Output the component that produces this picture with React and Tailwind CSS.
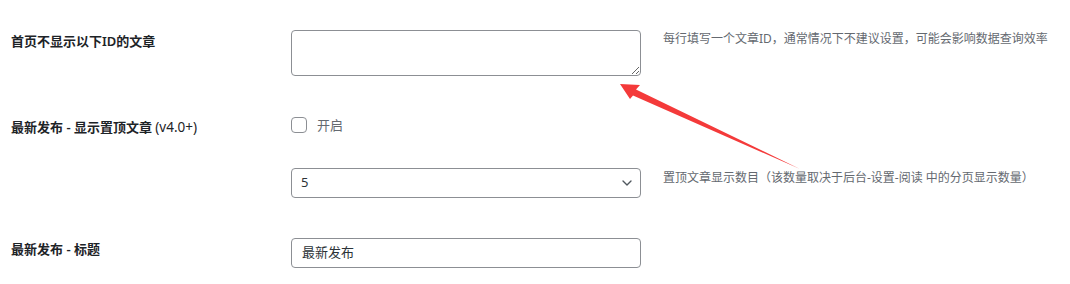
import { ChevronDown } from 'lucide-react'

const font = { fontFamily: '"Noto Sans", "Noto Sans CJK SC", sans-serif' }

function Label({ children, className = '' }) {
  return (
    <div className={'w-[291px] shrink-0 pl-[11px] text-[13px] leading-5 font-semibold text-[#1d2327] ' + className}>
      {children}
    </div>
  )
}

function Desc({ children, className = '' }) {
  return <p className={'ml-[22px] text-[12px] leading-5 text-[#646970] whitespace-nowrap ' + className}>{children}</p>
}

function Arrow() {
  return (
    <svg className="absolute left-0 top-0 pointer-events-none" width="1070" height="284" viewBox="0 0 1070 284">
      <polygon
        points="620,84 640,85 636,89.5 800,169 633,95.5 630,99"
        fill="#f43a3a"
      />
    </svg>
  )
}

export default function App() {
  return (
    <div className="relative w-[1070px] h-[284px] bg-white overflow-hidden" style={font}>
      <div className="flex pt-[30px]">
        <Label className="pt-[1px]">首页不显示以下ID的文章</Label>
        <textarea className="w-[350px] h-[46px] shrink-0 border border-[#8c8f94] rounded-[4px] bg-white" />
        <Desc className="-mt-[1px]">每行填写一个文章ID，通常情况下不建议设置，可能会影响数据查询效率</Desc>
      </div>

      <div className="flex mt-[41px]">
        <Label>
          最新发布 - 显示置顶文章 <span className="font-normal text-[13.5px]">(v4.0+)</span>
        </Label>
        <label className="flex items-start gap-[10px]">
          <span className="w-4 h-4 border border-[#8c8f94] rounded-[4px] bg-white" />
          <span className="text-[13px] leading-[18px] -mt-[1px] text-[#646970]">开启</span>
        </label>
      </div>

      <div className="flex mt-[31px]">
        <div className="w-[291px] shrink-0" />
        <div className="w-[350px] h-[30px] shrink-0 border border-[#8c8f94] rounded-[4px] bg-white flex items-center justify-between pl-[9px] pr-[5px] text-[13px] text-[#2c3338]">
          <span>5</span>
          <ChevronDown className="w-4 h-4 text-[#50575e]" strokeWidth={2} />
        </div>
        <Desc>置顶文章显示数目（该数量取决于后台-设置-阅读 中的分页显示数量）</Desc>
      </div>

      <div className="flex mt-[40px]">
        <Label className="pt-[1px]">最新发布 - 标题</Label>
        <div className="w-[350px] h-[30px] shrink-0 border border-[#8c8f94] rounded-[4px] bg-white flex items-center pl-[10px] text-[13px] text-[#2c3338]">
          最新发布
        </div>
      </div>

      <Arrow />
    </div>
  )
}
